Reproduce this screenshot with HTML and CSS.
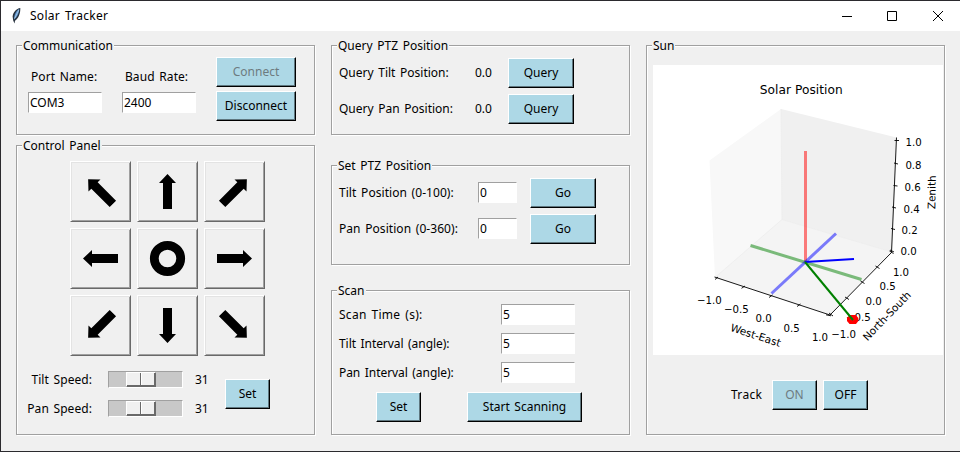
FILE: index.html
```html
<!DOCTYPE html>
<html lang="en">
<head>
<meta charset="utf-8">
<title>Solar Tracker</title>
<link rel="stylesheet" href="styles.css">
</head>
<body>
<div class="window">
  <header class="titlebar">
    <svg class="feather" width="11" height="18" viewBox="0 0 11 18">
      <path d="M9.300 1C5.500 1.600 2.200 5 1.600 9.500L2.200 13.500L3.500 16.500L4 13.800C7.500 11.500 9.500 6.500 9.300 1Z" fill="#27313d"/>
      <path d="M8.300 1.800C5.500 3.500 3 7.500 3 12.500C6.300 10.500 8 6.500 8.300 1.800Z" fill="#5a92cc"/>
      <path d="M7.800 3L3.600 11.500" stroke="#b5cfe5" stroke-width=".8"/>
    </svg>
    <span class="title">Solar Tracker</span>
    <svg class="controls" width="104" height="12" viewBox="0 0 104 12" fill="none" stroke="#000">
      <path d="M0 6.500H10M45.500 1.500H54.500V10.500H45.500ZM91 1L101 11M101 1L91 11" stroke-width="1"/>
    </svg>
  </header>
  <main class="columns">
    <div class="column">
      <section class="group comm">
        <h2 class="legend">Communication</h2>
        <div class="field">
          <label>Port Name:</label>
          <div class="entry">COM3</div>
        </div>
        <div class="field">
          <label>Baud Rate:</label>
          <div class="entry">2400</div>
        </div>
        <div class="stack">
          <button class="btn w80" disabled>Connect</button>
          <button class="btn w80">Disconnect</button>
        </div>
      </section>
      <section class="group control">
        <h2 class="legend">Control Panel</h2>
        <div class="pad">
          <button class="key"><svg class="arrow nw" viewBox="0 0 61 61"><path d="M30.500 13L39 22H35V48H26V22H22Z"/></svg></button>
          <button class="key"><svg class="arrow" viewBox="0 0 61 61"><path d="M30.500 13L39 22H35V48H26V22H22Z"/></svg></button>
          <button class="key"><svg class="arrow ne" viewBox="0 0 61 61"><path d="M30.500 13L39 22H35V48H26V22H22Z"/></svg></button>
          <button class="key"><svg class="arrow w" viewBox="0 0 61 61"><path d="M30.500 13L39 22H35V48H26V22H22Z"/></svg></button>
          <button class="key"><svg class="arrow" viewBox="0 0 61 61"><circle cx="30.500" cy="30.500" r="13.200" fill="none" stroke="#000" stroke-width="8.800"/></svg></button>
          <button class="key"><svg class="arrow e" viewBox="0 0 61 61"><path d="M30.500 13L39 22H35V48H26V22H22Z"/></svg></button>
          <button class="key"><svg class="arrow sw" viewBox="0 0 61 61"><path d="M30.500 13L39 22H35V48H26V22H22Z"/></svg></button>
          <button class="key"><svg class="arrow s" viewBox="0 0 61 61"><path d="M30.500 13L39 22H35V48H26V22H22Z"/></svg></button>
          <button class="key"><svg class="arrow se" viewBox="0 0 61 61"><path d="M30.500 13L39 22H35V48H26V22H22Z"/></svg></button>
        </div>
        <div class="speeds">
          <div class="sliders">
            <label>Tilt Speed:</label><div class="slider"><i class="knob"></i></div><span>31</span>
            <label>Pan Speed:</label><div class="slider"><i class="knob"></i></div><span>31</span>
          </div>
          <button class="btn w45">Set</button>
        </div>
      </section>
    </div>
    <div class="column">
      <section class="group query">
        <h2 class="legend">Query PTZ Position</h2>
        <div class="row"><label>Query Tilt Position:</label><span>0.0</span><button class="btn w66">Query</button></div>
        <div class="row"><label>Query Pan Position:</label><span>0.0</span><button class="btn w66">Query</button></div>
      </section>
      <section class="group setpos">
        <h2 class="legend">Set PTZ Position</h2>
        <div class="row"><label>Tilt Position (0-100):</label><div class="entry small">0</div><button class="btn w66">Go</button></div>
        <div class="row"><label>Pan Position (0-360):</label><div class="entry small">0</div><button class="btn w66">Go</button></div>
      </section>
      <section class="group scan">
        <h2 class="legend">Scan</h2>
        <div class="row"><label class="loose">Scan Time (s):</label><div class="entry">5</div></div>
        <div class="row"><label>Tilt Interval (angle):</label><div class="entry">5</div></div>
        <div class="row"><label>Pan Interval (angle):</label><div class="entry">5</div></div>
        <div class="actions"><button class="btn w45">Set</button><button class="btn w115">Start Scanning</button></div>
      </section>
    </div>
    <section class="group sun">
      <h2 class="legend">Sun</h2>
      <svg class="plot" width="290" height="290" viewBox="653 65 290 290">
        <rect x="653" y="65" width="290" height="290" fill="#fff"/>
        <path d="M781 109L709.500 160.500L715 277.500L782 219.500Z" fill="#f8f8f8"/>
        <path d="M781 109L896.500 137.500L892 252L782 219.500Z" fill="#f0f0f0"/>
        <path d="M782 219.500L715 277.500L830.500 315L892 252Z" fill="#f4f4f4"/>
        <path d="M715 277.500L782 219.500L892 252M781 109L782 219.500" fill="none" stroke="#ececec" stroke-width=".8"/>
        <path d="M714.500 277L830 315L891.500 252.500L896.500 137.500" fill="none" stroke="#000" stroke-width=".9"/>
        <path d="M715 279.500L718 277M741.500 288.300L745 286M769 297.500L772.500 295M797 306.500L800.500 304M826 314.800L831 315.800
          M829 313L833 316M845 297L849 299.500M860.500 281L864.500 283.500M875.500 266L879.500 268.500M889.500 251L893.500 253.500
          M890 250L894 252M891 228.500L895 229.500M892 207L896 208M893.500 185.500L897.500 186M894 163L898 164M894.500 140.500L899 140.500" stroke="#000" stroke-width=".9"/>
        <g stroke-width="3" stroke-opacity=".5">
          <path d="M805.500 151V262" stroke="#f00"/>
          <path d="M750.500 245.500L861.500 279.500" stroke="green"/>
          <path d="M771.500 293.500L836 233.500" stroke="#00f"/>
        </g>
        <path d="M805 262L854 259" stroke="#00f" stroke-width="2"/>
        <g class="ticks">
          <text x="709.300" y="304">−1.0</text><text x="736.300" y="313">−0.5</text><text x="763.700" y="322">0.0</text><text x="791.700" y="332">0.5</text><text x="820" y="341">1.0</text>
          <text x="843.700" y="338">−1.0</text><text x="858.300" y="321">−0.5</text><text x="873.700" y="305">0.0</text><text x="887.700" y="290">0.5</text><text x="901" y="276">1.0</text>
          <text x="908.700" y="255">0.0</text><text x="909.700" y="234">0.2</text><text x="911.700" y="213">0.4</text><text x="912.700" y="191">0.6</text><text x="913.500" y="169">0.8</text><text x="913.700" y="146">1.0</text>
          <text class="axis-title" transform="translate(754.500 338.800) rotate(18)">West-East</text>
          <text class="axis-title" transform="translate(889.500 318.500) rotate(-46)">North-South</text>
          <text class="axis-title" transform="translate(935.500 192.300) rotate(-89)">Zenith</text>
          <text class="plot-title" x="801.300" y="94">Solar Position</text>
        </g>
        <path d="M849.500 315H856L858.300 318V321L856 324H849.500L847 321V318Z" fill="#f00"/>
        <path d="M805 262L853 320" stroke="green" stroke-width="2"/>
      </svg>
      <div class="track"><label>Track</label><button class="btn w45" disabled>ON</button><button class="btn w45">OFF</button></div>
    </section>
  </main>
</div>
</body>
</html>
```

FILE: styles.css
```css
* { box-sizing: border-box; }
body { margin: 0; font: 12px/16px "Noto Sans", "Open Sans", sans-serif; color: #000; word-spacing: 1.5px; }
.window { width: 960px; height: 452px; background: #f0f0f0; border: 1px solid #2b2a2e; border-right: 0; overflow: hidden; }
.titlebar { display: flex; align-items: center; height: 30px; background: #fff; padding: 0 15px 0 10px; }
.title { margin-left: 8px; flex: 1; letter-spacing: .28px; }
.controls { margin-right: -1px; }
.columns { display: grid; grid-template-columns: repeat(3, 299px); column-gap: 16px; padding: 14px 0 0 15px; }
.column { display: flex; flex-direction: column; }
.group { position: relative; border: 1px solid #a0a0a0; box-shadow: 1px 1px 0 #fff, inset 1px 1px 0 #fff; }
.legend { position: absolute; left: 5px; top: -8px; margin: 0; padding: 0 1px; font-size: 12px; font-weight: 400; line-height: 16px; background: #f0f0f0; white-space: nowrap; }
label, span, button { white-space: nowrap; }
button { font: inherit; padding: 0; color: #000; word-spacing: inherit; }
.btn { height: 30px; border: 1px solid; border-color: #fff #000 #000 #fff; background: #add8e6; box-shadow: inset -1px -1px 0 #5f777f; }
.btn:disabled { color: #6d7b80; }
.w80 { width: 80px; } .w45 { width: 45px; } .w115 { width: 115px; }
.btn.w66 { width: 66px; }
.entry { width: 74px; height: 21px; background: #fff; border: 1px solid; border-color: #a0a0a0 #fff #fff #a0a0a0; padding: 1px; line-height: 18px; }
.entry.small { width: 39px; margin-bottom: 1px; }

.comm { height: 90px; display: flex; align-items: flex-start; padding: 11px 0 0 11px; }
.field { width: 94px; padding-top: 12px; }
.field label { display: block; margin-left: 3px; margin-bottom: 7px; letter-spacing: .07px; }
.stack { display: grid; gap: 4px; }

.control { height: 290px; margin-top: 10px; padding-top: 15px; }
.pad { display: grid; grid-template-columns: repeat(3, 61px); grid-auto-rows: 61px; gap: 6px; margin-left: 53px; }
.key { border: 1px solid; border-color: #fff #696969 #696969 #fff; background: #f0f0f0; box-shadow: inset 1px 1px 0 #e3e3e3, inset -1px -1px 0 #a0a0a0; }
.arrow { display: block; width: 61px; height: 61px; margin: -1px; }
.nw { transform: rotate(-45deg); } .ne { transform: rotate(45deg); }
.w { transform: rotate(-90deg); } .e { transform: rotate(90deg); }
.sw { transform: rotate(-135deg); } .s { transform: rotate(180deg); } .se { transform: rotate(135deg); }
.speeds { display: flex; align-items: center; margin-top: 15px; }
.sliders { display: grid; grid-template-columns: 76px 75px 13px; grid-auto-rows: 17px; row-gap: 12px; column-gap: 15px; align-items: center; width: 208px; }
.sliders label { text-align: right; padding-right: 1px; letter-spacing: .06px; }
.sliders span { margin-left: -3px; }
.slider { height: 17px; padding-left: 17px; background: #c8c8c8; border: 1px solid; border-color: #a0a0a0 #fff #fff #a0a0a0; }
.knob { display: block; width: 30px; height: 15px; border: 1px solid; border-color: #fff #696969 #696969 #fff; box-shadow: inset -1px -1px 0 #696969; background: linear-gradient(90deg, #f0f0f0 13px, #696969 13px 14px, #fff 14px 15px, #f0f0f0 15px); }

.row { display: flex; align-items: center; }
.query { height: 90px; display: grid; grid-template-rows: 30px 30px; row-gap: 6px; padding: 12px 0 0 7px; }
.query label { width: 136px; } .query span { width: 33px; }
.setpos { height: 100px; margin-top: 30px; display: grid; grid-template-rows: 30px 30px; row-gap: 6px; padding: 12px 0 0 7px; }
.setpos label { width: 139px; letter-spacing: .05px; } .setpos .btn { margin-left: 13px; }
.scan { height: 145px; margin-top: 25px; padding: 13px 0 0 7px; }
.scan .row { height: 21px; margin-bottom: 8px; }
.scan label { width: 162px; letter-spacing: -.06px; }
.scan .loose { letter-spacing: .28px; }
.actions { display: flex; gap: 46px; margin: 9px 0 0 37px; }
.sun { height: 390px; padding: 19px 0 0 6px; }
.plot { display: block; word-spacing: 0; }
.ticks { font: 10.2px "DejaVu Sans", sans-serif; text-anchor: middle; }
.axis-title { font-size: 10.5px; }
.plot-title { font-size: 12.2px; letter-spacing: .05px; }
.track { display: flex; align-items: center; gap: 6px; margin: 25px 0 0 78px; }
.track label { width: 35px; letter-spacing: .3px; }
```
